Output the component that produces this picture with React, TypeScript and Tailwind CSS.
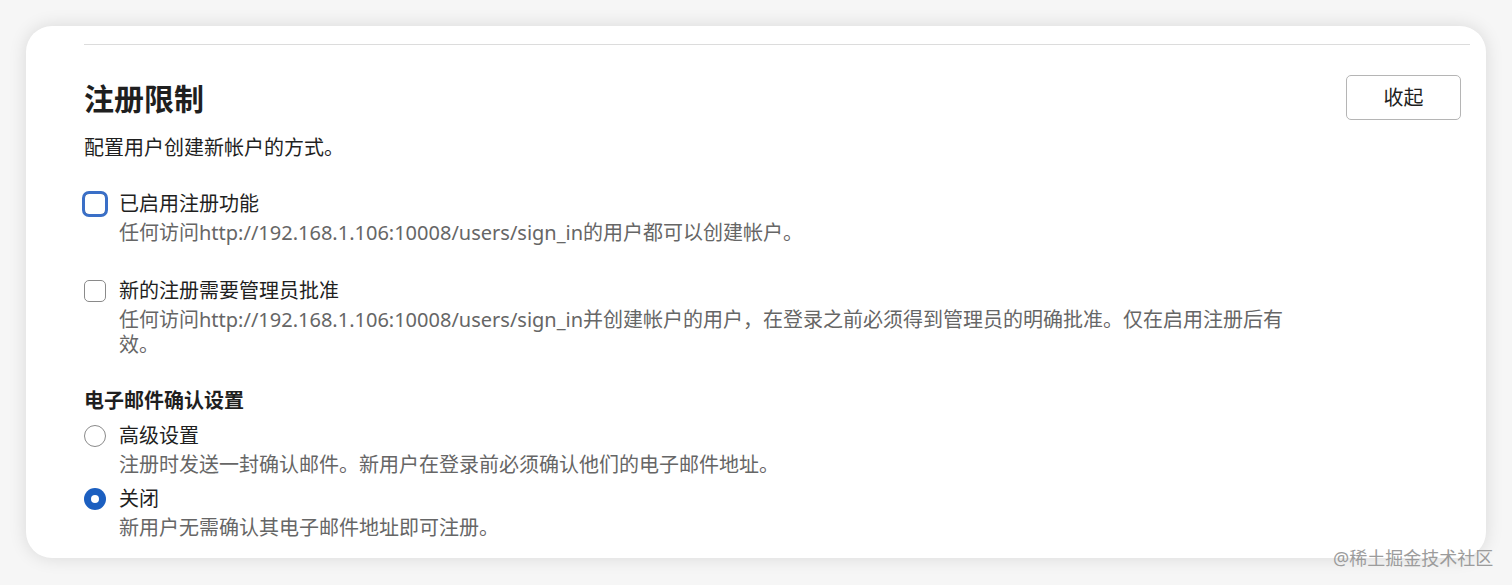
import React, { useState } from "react";

const font = "font-['Noto_Sans','Noto_Sans_CJK_SC',sans-serif]";

const Checkbox: React.FC<{ focused?: boolean }> = ({ focused }) => (
  <span
    className={
      "mt-[3.5px] flex h-[22px] w-[22px] shrink-0 rounded-[5px] border-[1.5px] border-[#8a8a8a] bg-white " +
      (focused ? "outline-[3px] outline-solid outline-[#3a6fc7] outline-offset-[-1px]" : "")
    }
  />
);

const Radio: React.FC<{ checked?: boolean }> = ({ checked }) =>
  checked ? (
    <span className="mt-[3.5px] flex h-[22px] w-[22px] shrink-0 items-center justify-center rounded-full bg-[#1c5fc0]">
      <span className="h-[8px] w-[8px] rounded-full bg-white" />
    </span>
  ) : (
    <span className="mt-[3.5px] h-[22px] w-[22px] shrink-0 rounded-full border-[1.5px] border-[#8a8a8a] bg-white" />
  );

const Option: React.FC<{
  control: React.ReactNode;
  label: string;
  desc: string;
  descClass?: string;
}> = ({ control, label, desc, descClass = "leading-[29px]" }) => (
  <div className="flex gap-[13px]">
    {control}
    <div>
      <div className="text-[20px] leading-[29px] text-[#1f1f1f]">{label}</div>
      <div className={"max-w-[1172px] text-[20px] text-[#666666] " + descClass}>{desc}</div>
    </div>
  </div>
);

export default function App() {
  const [open] = useState(true);

  return (
    <div className={"relative min-h-[585px] bg-[#f6f6f6] pt-[26px] pl-[26px] pr-[26px] " + font}>
      <div className="rounded-[26px] bg-white pt-[18px] pl-[58px] pr-[25px] pb-[16px] shadow-[0_0_18px_rgba(0,0,0,0.12)]">
        <div className="mr-[-9px] h-px bg-[#dcdcdc]" />

        <div className="mt-[30px] flex items-center justify-between">
          <h2 className="mt-[2px] text-[30px] font-bold leading-[40px] text-[#1f1f1f]">注册限制</h2>
          <button className="h-[45px] w-[115px] rounded-[5px] border border-[#b5b5b5] bg-white text-[20px] text-[#1f1f1f]">
            {open ? "收起" : "展开"}
          </button>
        </div>

        <p className="mt-[14px] text-[20px] leading-[28px] text-[#1f1f1f]">配置用户创建新帐户的方式。</p>

        <div className="mt-[27px] flex flex-col gap-[29px]">
          <Option
            control={<Checkbox focused />}
            label="已启用注册功能"
            desc="任何访问http://192.168.1.106:10008/users/sign_in的用户都可以创建帐户。"
          />
          <Option
            control={<Checkbox />}
            label="新的注册需要管理员批准"
            desc="任何访问http://192.168.1.106:10008/users/sign_in并创建帐户的用户，在登录之前必须得到管理员的明确批准。仅在启用注册后有效。"
            descClass="mt-[2px] leading-[25px]"
          />
        </div>

        <div className="mt-[30px] text-[20px] font-bold leading-[28px] text-[#1f1f1f]">电子邮件确认设置</div>
        <div className="mt-[6px] flex flex-col gap-[5px]">
          <Option
            control={<Radio />}
            label="高级设置"
            desc="注册时发送一封确认邮件。新用户在登录前必须确认他们的电子邮件地址。"
          />
          <Option control={<Radio checked />} label="关闭" desc="新用户无需确认其电子邮件地址即可注册。" />
        </div>
      </div>

      <span className="absolute left-[1333px] top-[545px] text-[18px] leading-[26px] text-[#9c9c9c]">
        @稀土掘金技术社区
      </span>
    </div>
  );
}
